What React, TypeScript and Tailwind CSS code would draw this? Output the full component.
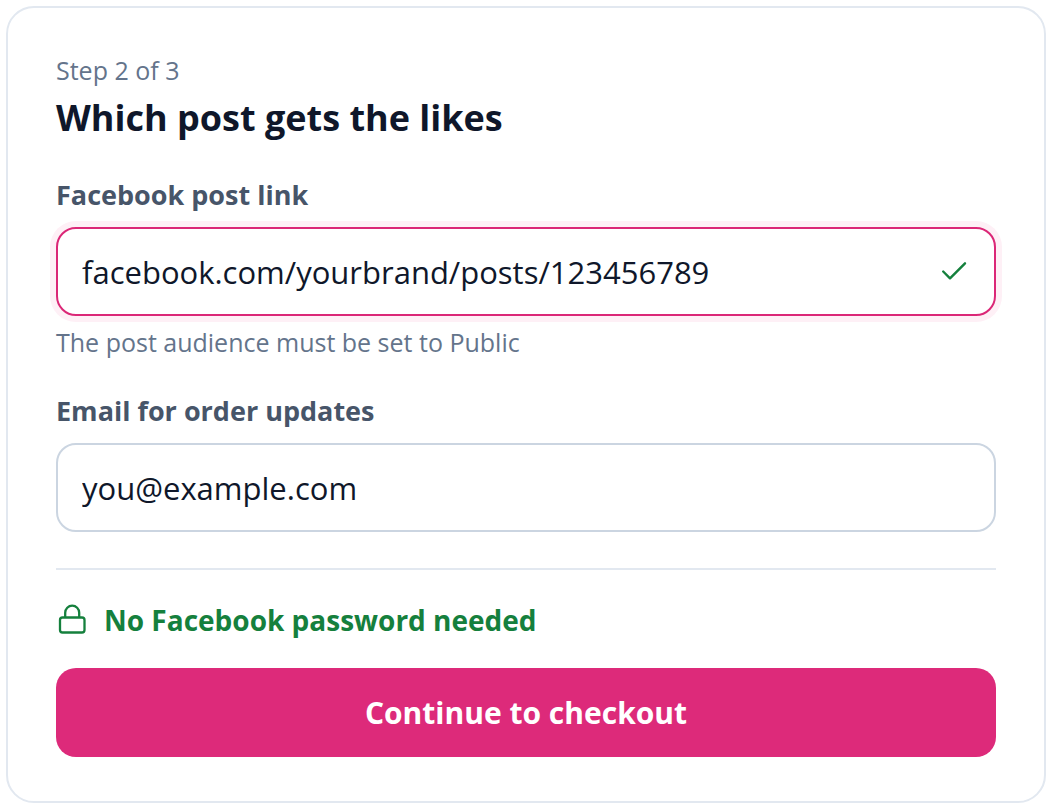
import type { InputHTMLAttributes, ReactNode } from 'react'
import { clsx } from 'clsx'

interface FieldProps extends InputHTMLAttributes<HTMLInputElement> {
  id: string
  label: string
  active?: boolean
  icon?: ReactNode
  hint?: string
}

function Field({ id, label, active, icon, hint, ...props }: FieldProps) {
  return (
    <div>
      <label htmlFor={id} className="block text-[27px] leading-[38px] font-bold text-[#475569]">
        {label}
      </label>
      <div
        className={clsx(
          'mt-[13px] flex items-center gap-4 rounded-[20px] border-2 bg-white px-6',
          active ? 'border-[#db2777] ring-6 ring-[#fef0f6]' : 'border-[#cbd5e1]',
        )}
      >
        <input
          id={id}
          aria-describedby={hint ? `${id}-hint` : undefined}
          className="h-[85px] min-w-0 flex-1 bg-transparent text-[31px] text-[#0f172a] outline-none"
          {...props}
        />
        {icon}
      </div>
      {hint && (
        <p id={`${id}-hint`} className="mt-2 text-[25px] leading-9 text-[#64748b]">
          {hint}
        </p>
      )}
    </div>
  )
}

function CheckIcon() {
  return (
    <svg
      viewBox="0 0 32 32"
      className="size-8 shrink-0 text-[#15803d]"
      fill="none"
      stroke="currentColor"
      strokeWidth="2.4"
      strokeLinecap="round"
      strokeLinejoin="round"
      aria-hidden="true"
    >
      <path d="M5.2 15.5l6.8 6.8L27 7.3" />
    </svg>
  )
}

function LockIcon() {
  return (
    <svg
      viewBox="0 0 32 32"
      className="size-8 shrink-0"
      fill="none"
      stroke="currentColor"
      strokeWidth="2.3"
      aria-hidden="true"
    >
      <rect x="4" y="13.5" width="24.5" height="15" rx="2.5" />
      <path d="M9.2 13.5V8.7a7 7 0 0 1 14 0v4.8" />
    </svg>
  )
}

export default function App() {
  return (
    <main className="bg-white p-[6px] font-['Open_Sans','Noto_Sans',sans-serif]">
      <form
        className="rounded-[28px] border-2 border-[#e2e8f0] bg-white px-12 pt-11 pb-11"
        onSubmit={(event) => event.preventDefault()}
      >
        <p className="text-[25px] leading-9 text-[#64748b]">Step 2 of 3</p>
        <h1 className="text-[36px] leading-[60px] font-bold text-[#0f172a]">Which post gets the likes</h1>

        <div className="mt-7 space-y-8">
          <Field
            id="post-link"
            label="Facebook post link"
            defaultValue="facebook.com/yourbrand/posts/123456789"
            hint="The post audience must be set to Public"
            icon={<CheckIcon />}
            active
          />
          <Field id="email" type="email" label="Email for order updates" defaultValue="you@example.com" />
        </div>

        <div className="mt-9 border-t-2 border-[#e2e8f0] pt-8">
          <p className="flex items-center gap-4 text-[28px] leading-9 font-bold text-[#15803d]">
            <LockIcon />
            No Facebook password needed
          </p>
          <button
            type="submit"
            className="mt-[30px] h-[89px] w-full rounded-[20px] bg-[#dd2a7a] text-[30px] font-bold text-white"
          >
            Continue to checkout
          </button>
        </div>
      </form>
    </main>
  )
}
